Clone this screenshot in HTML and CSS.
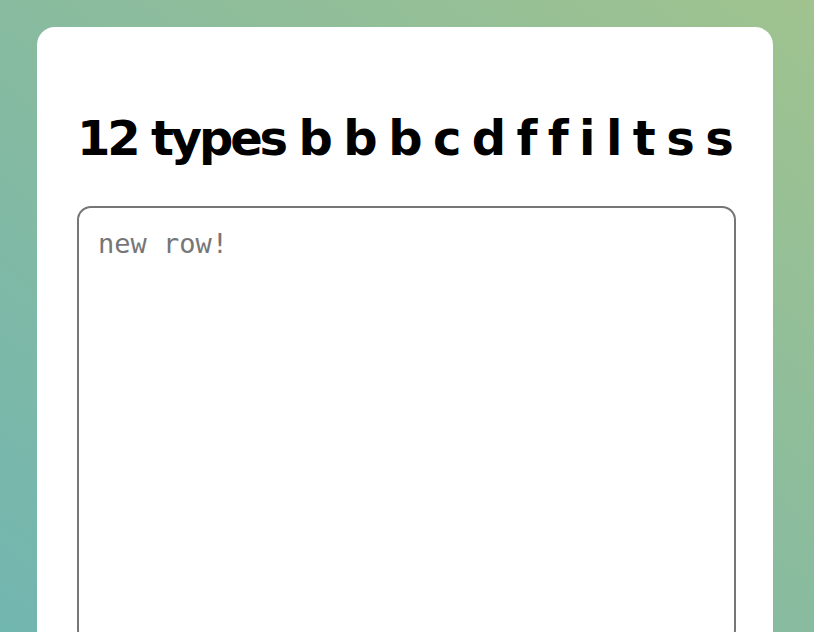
FILE: index.html
```html
<!DOCTYPE html>
<html>
<head>
<meta charset="utf-8">
<link rel="stylesheet" href="styles.css">
</head>
<body>
<main class="card">
  <h1 class="title">12 types b b b c d f f i l t s s</h1>
  <textarea class="entry" placeholder="new row!"></textarea>
</main>
</body>
</html>
```
FILE: styles.css
```css
html, body {
  margin: 0;
  height: 100%;
}
body {
  background: linear-gradient(to top right, #72b6b0 0%, #88bb9f 50%, #a0c38f 100%);
  padding: 27px 41px 0 37px;
  box-sizing: border-box;
  overflow: hidden;
}
.card {
  background: #fff;
  border-radius: 18px;
  width: 736px;
  box-sizing: border-box;
  padding: 40px 37px 40px 40px;
  min-height: 700px;
}
.title {
  font-family: "DejaVu Sans", sans-serif;
  font-weight: bold;
  font-size: 48px;
  letter-spacing: -3.15px;
  line-height: 56px;
  margin: 43px 0 40px 0;
  color: #000;
  white-space: nowrap;
}
.entry {
  display: block;
  width: 659px;
  height: 438px;
  box-sizing: border-box;
  border: 2px solid #767676;
  border-radius: 14px;
  padding: 20px 17px 18px 19px;
  font-family: "DejaVu Sans Mono", monospace;
  font-size: 27px;
  resize: vertical;
  outline: none;
}
.entry::placeholder {
  color: #767676;
}
```
